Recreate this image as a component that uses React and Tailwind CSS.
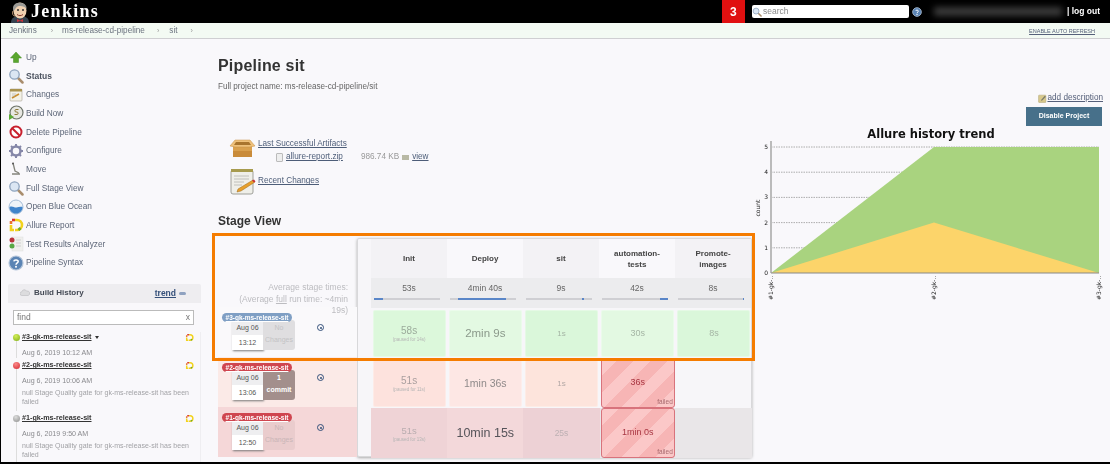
import React from 'react';

const Ic = ({ size = 16, children, className = '' }) => (
  <svg width={size} height={size} viewBox="0 0 16 16" className={`shrink-0 ${className}`}>
    {children}
  </svg>
);

const JenkinsLogo = () => (
  <svg width="20" height="23" viewBox="0 0 20 23" className="shrink-0">
    <path d="M1 23c0-5 3-7 9-7s9 2 9 7z" fill="#35424f" />
    <path d="M7 19l3 1.500 3-1.500v3l-3-1-3 1z" fill="#c8323a" />
    <ellipse cx="10" cy="10.500" rx="6.500" ry="8" fill="#efd0b0" />
    <path d="M3.500 11C1.500 5 6 2 11 3c4 0 6 3 5.500 6-2-3-6-3.500-9-2.500-2 1-2 3-4 4.500z" fill="#9a9a96" />
    <circle cx="8" cy="10" r="1" fill="#333" />
    <circle cx="13" cy="10" r="1" fill="#333" />
    <path d="M7 14.500c2 1.500 4 1.500 6 0" stroke="#8a3b30" strokeWidth="1" fill="none" />
    <path d="M3 11c-1 3 0 5 2 5" stroke="#c9a27e" strokeWidth="1" fill="none" />
  </svg>
);

const UpIcon = () => (
  <Ic><path d="M8 3l5.500 6H10.500v4.500h-5V9H2.500z" fill="#5aa62e" stroke="#3f8a1f" strokeWidth=".5" /></Ic>
);
const SearchIcon = ({ size = 16 }) => (
  <Ic size={size}>
    <path d="M10 10l4.500 4.500" stroke="#a98d6d" strokeWidth="2.500" strokeLinecap="round" />
    <circle cx="6.500" cy="6.500" r="4.700" fill="#dbe6f3" stroke="#8ea3bd" strokeWidth="1.300" />
  </Ic>
);
const NotesIcon = () => (
  <Ic>
    <rect x="2" y="2" width="12" height="12" rx="1" fill="#f3f1e6" stroke="#a7a396" strokeWidth=".6" />
    <rect x="2" y="2" width="12" height="2.500" fill="#a8924f" />
    <path d="M4 11l7-4" stroke="#c98d2c" strokeWidth="1.500" />
    <path d="M4 7h4M4 9h3" stroke="#aaa" strokeWidth=".6" />
  </Ic>
);
const BuildIcon = () => (
  <Ic>
    <circle cx="8.500" cy="7.500" r="6.500" fill="#e7e7e2" stroke="#6c7368" strokeWidth="1.200" />
    <path d="M10.500 4.500H8c-1.500 0-1.500 2.500 0 2.500h1c1.500 0 1.500 2.500 0 2.500H6.500" stroke="#8c7a3c" strokeWidth="1" fill="none" />
    <path d="M1 9l5 3-5 3z" fill="#5cab35" />
  </Ic>
);
const DeleteIcon = () => (
  <Ic>
    <circle cx="8" cy="8" r="5.500" fill="#fff" stroke="#c8202e" strokeWidth="2" />
    <path d="M4.200 4.200l7.600 7.600" stroke="#c8202e" strokeWidth="2" />
  </Ic>
);
const GearIcon = () => (
  <Ic>
    <circle cx="8" cy="8" r="4.500" fill="none" stroke="#8587a8" strokeWidth="2.500" />
    <path d="M8 1v3M8 12v3M1 8h3M12 8h3M3 3l2 2M11 11l2 2M13 3l-2 2M5 11l-2 2" stroke="#8587a8" strokeWidth="2" />
  </Ic>
);
const MoveIcon = () => (
  <Ic>
    <path d="M5 2l2 8 4 2M4 13h8" stroke="#84847c" strokeWidth="1.300" fill="none" />
    <circle cx="5" cy="2.500" r="1" fill="#555" />
  </Ic>
);
const OceanIcon = () => (
  <Ic>
    <circle cx="8" cy="8" r="7" fill="#eef3f8" stroke="#a3bbd6" strokeWidth="1" />
    <path d="M1.500 8c3-1.500 5 1 7 .5s4-1 6-.5c0 4-3 6.500-6.500 6.500S1.500 12 1.500 8z" fill="#3f84cb" />
  </Ic>
);
const AllureIcon = ({ size = 16 }) => (
  <Ic size={size}>
    <path d="M7 3h2a5 5 0 0 1 0 10H7" fill="none" stroke="#f2d21c" strokeWidth="2.600" />
    <path d="M4 3h3" stroke="#d8342c" strokeWidth="2.600" />
    <path d="M3 4v3" stroke="#e8732c" strokeWidth="2.600" />
    <path d="M3 8v5h3" fill="none" stroke="#f2d21c" strokeWidth="2.600" />
    <path d="M12.500 11l-2 2" stroke="#6aa92f" strokeWidth="2.600" />
  </Ic>
);
const AnalyzerIcon = () => (
  <Ic>
    <rect x="4" y="1" width="11" height="14" fill="#efefed" stroke="#ddd" strokeWidth=".5" />
    <circle cx="4" cy="4" r="2.500" fill="#b8323a" />
    <circle cx="4" cy="10" r="2.500" fill="#58a845" />
    <path d="M8 4h5M8 7h5M8 10h5" stroke="#cfcfcf" />
  </Ic>
);
const HelpIcon = ({ size = 16 }) => (
  <Ic size={size}>
    <circle cx="8" cy="8" r="7" fill="#5b84b4" stroke="#b6c6da" strokeWidth="1.200" />
    <path d="M5.800 6.300C6 4.500 10.200 4.400 10.200 6.600 10.200 8 8 8 8 9.800" stroke="#fff" strokeWidth="1.500" fill="none" />
    <circle cx="8" cy="11.800" r="1" fill="#fff" />
  </Ic>
);
const CloudIcon = () => (
  <Ic size={10}>
    <path d="M3 12a3 3 0 0 1 0-6 4 4 0 0 1 7.500-1A3.500 3.500 0 0 1 13 12z" fill="#dcdcde" stroke="#bdbdc0" strokeWidth="1" />
  </Ic>
);
const EditIcon = () => (
  <Ic size={9}>
    <rect x="1" y="2" width="13" height="13" rx="1" fill="#d8c98c" stroke="#a89a68" strokeWidth=".8" />
    <path d="M5 11l7-8 2 2-7 7z" fill="#7a7a6a" />
  </Ic>
);
const BoxIcon = () => (
  <svg width="27" height="21" viewBox="0 0 27 21" className="shrink-0">
    <path d="M4 8h19v11H4z" fill="#d9a04e" />
    <path d="M4 13h19v6H4z" fill="#c98b3a" />
    <path d="M1 8l5-6h15l5 6-5 1H6z" fill="#eec07a" stroke="#c4914a" strokeWidth=".5" />
    <path d="M7 4h13l2 3H5z" fill="#a8742e" />
  </svg>
);
const RecentIcon = () => (
  <svg width="27" height="27" viewBox="0 0 27 27" className="shrink-0">
    <rect x="2" y="2" width="22" height="24" rx="2" fill="#efefe9" stroke="#8a8a84" strokeWidth=".8" />
    <rect x="2" y="1" width="22" height="3" fill="#a79b4e" />
    <path d="M5 8h15M5 11h15M5 14h10M5 17h8" stroke="#b5b5ae" strokeWidth=".8" />
    <path d="M9 21l15-9 2 2-14 9-4 1z" fill="#e8a02c" stroke="#9a6a1c" strokeWidth=".5" />
    <path d="M23 12.500l2-1 1.500 2-1.500 1z" fill="#c8323a" />
  </svg>
);

const tasks = [
  ['Up', UpIcon],
  ['Status', SearchIcon],
  ['Changes', NotesIcon],
  ['Build Now', BuildIcon],
  ['Delete Pipeline', DeleteIcon],
  ['Configure', GearIcon],
  ['Move', MoveIcon],
  ['Full Stage View', SearchIcon],
  ['Open Blue Ocean', OceanIcon],
  ['Allure Report', AllureIcon],
  ['Test Results Analyzer', AnalyzerIcon],
  ['Pipeline Syntax', HelpIcon],
];

const history = [
  { name: '#3-gk-ms-release-sit', ball: 'bg-[radial-gradient(circle_at_40%_30%,#d4ee5a,#7fae16)]', date: 'Aug 6, 2019 10:12 AM', caret: true, h: 'h-[28px]' },
  { name: '#2-gk-ms-release-sit', ball: 'bg-[radial-gradient(circle_at_40%_30%,#fb8a8a,#d3252f)]', date: 'Aug 6, 2019 10:06 AM', note: true, h: 'h-[53px]' },
  { name: '#1-gk-ms-release-sit', ball: 'bg-[radial-gradient(circle_at_40%_30%,#ddd,#8d8d8d)]', date: 'Aug 6, 2019 9:50 AM', note: true, h: 'h-[53px]' },
];

const stages = [
  { name: ['Init'], avg: '53s', bar: 'ml-0 w-[9px]', tint: 'bg-[#f3f2f5]' },
  { name: ['Deploy'], avg: '4min 40s', bar: 'ml-[8px] w-[48px]', tint: 'bg-[#f9f8fb]' },
  { name: ['sit'], avg: '9s', bar: 'ml-[56px] w-[2px]', tint: 'bg-[#f3f2f5]' },
  { name: ['automation-', 'tests'], avg: '42s', bar: 'ml-[58px] w-[8px]', tint: 'bg-[#f9f8fb]' },
  { name: ['Promote-', 'images'], avg: '8s', bar: 'ml-[65px] w-[1px]', tint: 'bg-[#f3f2f5]' },
];

const runs = [
  {
    badge: '#3-gk-ms-release-sit', badgeBg: 'bg-[#7f9fc4]', rowBg: 'bg-[#faf9fb]', date: 'Aug 06', time: '13:12',
    changes: ['No', 'Changes'], changeBg: 'bg-[#dfdee0] text-[#c3c3c5]', tableBg: '',
    cells: [
      { t: '58s', size: 'text-[10px] text-[#9bab9b]', bg: 'bg-[#dcf8db]', sub: '(paused for 14s)' },
      { t: '2min 9s', size: 'text-[11.500px] text-[#8b998b]', bg: 'bg-[#e3f9e2]' },
      { t: '1s', size: 'text-[8px] text-[#a5b5a5]', bg: 'bg-[#daf7da]' },
      { t: '30s', size: 'text-[9px] text-[#a5b5a5]', bg: 'bg-[#e3f9e2]' },
      { t: '8s', size: 'text-[9px] text-[#a5b5a5]', bg: 'bg-[#daf7da]' },
    ],
  },
  {
    badge: '#2-gk-ms-release-sit', badgeBg: 'bg-[#cf4650]', rowBg: 'bg-[#fbeae7]', date: 'Aug 06', time: '13:06',
    changes: ['1', 'commit'], changeBg: 'bg-[#a38f8c] text-white font-bold', tableBg: '',
    cells: [
      { t: '51s', size: 'text-[10px] text-[#a99e9e]', bg: 'bg-[#fde2dd]', sub: '(paused for 11s)' },
      { t: '1min 36s', size: 'text-[10.500px] text-[#8f8a8a]', bg: 'bg-[#fde7e4]' },
      { t: '1s', size: 'text-[8px] text-[#b3a8a6]', bg: 'bg-[#fde4dc]' },
      { t: '36s', failed: true },
      null,
    ],
  },
  {
    badge: '#1-gk-ms-release-sit', badgeBg: 'bg-[#cf4650]', rowBg: 'bg-[#f5d7d8]', date: 'Aug 06', time: '12:50',
    changes: ['No', 'Changes'], changeBg: 'bg-[#eacccd] text-[#c9b5b7]', tableBg: 'bg-[#e9e6e8]',
    cells: [
      { t: '51s', flush: true, size: 'text-[9.500px] text-[#b9adb0]', bg: 'bg-[#efd3d6]', sub: '(paused for 13s)' },
      { t: '10min 15s', flush: true, size: 'text-[12.500px] text-[#56545a]', bg: 'bg-[#f3d8da]' },
      { t: '25s', flush: true, size: 'text-[8.500px] text-[#bdb0b3]', bg: 'bg-[#edd1d5]' },
      { t: '1min 0s', failed: true },
      null,
    ],
  },
];

const BuildRow = ({ run }) => (
  <div className={`relative h-[50px] pl-[14px] pt-[13px] flex items-start ${run.rowBg}`}>
    <span className={`absolute left-[4px] top-[6px] z-10 w-[70px] h-[9px] rounded-full text-center text-[6.500px] leading-[9px] font-bold text-white underline ${run.badgeBg}`}>
      {run.badge}
    </span>
    <div className="w-[31px] h-[30px] bg-white shadow-[1px_1px_2px_#777] text-[7px] text-[#555] text-center">
      <div className="h-[15px] bg-[#eeeef0] leading-[15px]">{run.date}</div>
      <div className="h-[15px] leading-[15px]">{run.time}</div>
    </div>
    <div className={`w-[32px] h-[30px] rounded-r-[3px] text-center text-[7px] leading-[12px] pt-[2px] ${run.changeBg}`}>
      <div>{run.changes[0]}</div>
      <div>{run.changes[1]}</div>
    </div>
    <span className="ml-[22px] mt-[4px] w-[7px] h-[7px] rounded-full border border-[#33507a] flex items-center justify-center">
      <span className="w-[2px] h-[2px] rounded-full bg-[#33507a]" />
    </span>
  </div>
);

const StageCell = ({ cell }) => {
  if (!cell) return <div />;
  if (cell.failed) {
    return (
      <div className="relative mx-[1px] flex items-center justify-center rounded-[3px] border border-[#d8737c] bg-[repeating-linear-gradient(135deg,#fbc8c8_0_12px,#f7b5b5_12px_24px)] text-[9px] font-medium text-[#a83642]">
        {cell.t}
        <span className="absolute right-[1px] bottom-[1px] text-[6.500px] leading-[8px] font-normal text-[#a86a6e]">failed</span>
      </div>
    );
  }
  return (
    <div className={`${cell.flush ? '' : 'm-[1.500px] rounded-[2px] border border-white/30'} flex flex-col items-center justify-center ${cell.bg} ${cell.size}`}>
      <span className="leading-[13px]">{cell.t}</span>
      {cell.sub && <span className="text-[4.500px] leading-[5px] text-[#b5b5b5]">{cell.sub}</span>}
    </div>
  );
};

const TrendChart = () => {
  const y = (n) => 132 - n * 25.2;
  const x = [19, 182, 347];
  return (
    <svg width="358" height="172" viewBox="0 0 358 172" className="block">
      {[1, 2, 3, 4, 5].map((n) => (
        <line key={n} x1="19" x2="347" y1={y(n)} y2={y(n)} stroke="#999" strokeWidth=".8" strokeDasharray="1.500 1" />
      ))}
      <polygon points={`19,132 182,${y(5)} 347,${y(5)} 347,132`} fill="#a9d37f" />
      <polygon points={`19,132 182,${y(2)} 347,132`} fill="#fcd46a" />
      <line x1="19" x2="19" y1="0" y2="132" stroke="#bbb" strokeWidth="2" />
      <line x1="19" x2="347" y1="132" y2="132" stroke="#888" strokeWidth="1" />
      {[0, 1, 2, 3, 4, 5].map((n) => (
        <text key={n} x="16" y={y(n) + 2} textAnchor="end" fontSize="6" fill="#222" fontFamily="'DejaVu Sans', sans-serif">{n}</text>
      ))}
      <text transform="translate(7.500 67) rotate(-90)" textAnchor="middle" fontSize="6" fill="#222" fontFamily="'DejaVu Sans', sans-serif">count</text>
      {['#1-gk-..', '#2-gk-..', '#3-gk-..'].map((l, i) => (
        <text key={l} transform={`translate(${x[i] + 2} 159) rotate(-90)`} fontSize="6" fill="#222" fontFamily="'DejaVu Sans', sans-serif">{l}</text>
      ))}
    </svg>
  );
};

export default function App() {
  return (
    <div className="w-[1110px] h-[464px] overflow-hidden border-l border-b-2 border-black bg-[#f9f8fb] font-['Liberation_Sans',Arial,sans-serif] text-[8.300px] text-[#5d6678]">
      <div className="blur-[0.35px]">
        {/* top bar */}
        <header className="h-[23px] bg-black flex items-center text-white">
          <div className="ml-[9px] w-[21px] h-[23px]"><JenkinsLogo /></div>
          <span className="font-['Liberation_Serif',serif] font-bold text-[18px] tracking-[1.300px]">Jenkins</span>
          <div className="ml-auto w-[23px] h-[23px] bg-[#e01010] flex items-center justify-center font-bold text-[12px]">3</div>
          <div className="ml-[7px] w-[157px] h-[13px] bg-white rounded-[2px] flex items-center text-[8.500px] text-[#8a8a8a]">
            <SearchIcon size={10} />
            <span className="ml-[1px]">search</span>
          </div>
          <div className="ml-[3px]"><HelpIcon size={10} /></div>
          <div className="ml-[12px] w-[128px] h-[9px] bg-[#3a3a3a] blur-[3px]" />
          <span className="ml-[5px] mr-[10px] font-bold text-[8.500px]">| log out</span>
        </header>

        {/* breadcrumbs */}
        <nav className="h-[16px] pt-[1px] bg-[#f3faf3] border-b border-[#cfcfd2] flex items-center text-[8.200px] text-[#6d7480]">
          <span className="ml-[8px]">Jenkins</span>
          <span className="ml-[14px] text-[7px] text-[#999]">›</span>
          <span className="ml-[9px]">ms-release-cd-pipeline</span>
          <span className="ml-[12px] text-[7px] text-[#999]">›</span>
          <span className="ml-[10px]">sit</span>
          <span className="ml-[13px] text-[7px] text-[#999]">›</span>
          <span className="ml-auto mr-[15px] text-[5.500px] underline text-[#56607a]">ENABLE AUTO REFRESH</span>
        </nav>

        <div className="flex">
          {/* side panel */}
          <aside className="w-[217px] shrink-0 pl-[7px] pr-[17px] pt-[9px]">
            <ul>
              {tasks.map(([label, Icon]) => (
                <li key={label} className="h-[18.670px] flex items-center gap-[2px]">
                  <Icon />
                  <span className={label === 'Status' ? 'font-bold text-[8.500px] text-[#4d5460]' : ''}>{label}</span>
                </li>
              ))}
            </ul>
            <section className="mt-[12px]">
              <div className="h-[19px] bg-[#eeedf0] rounded-t-[2px] flex items-center pl-[12px] pr-[15px]">
                <CloudIcon />
                <span className="ml-[4px] font-bold text-[8px] text-[#444a55]">Build History</span>
                <span className="ml-auto font-bold text-[8.500px] underline text-[#35507a]">trend</span>
                <span className="ml-[3px] w-[7px] h-[3px] rounded-sm bg-[#8fa2c0]" />
              </div>
              <div className="ml-[5px] mr-[7px] mt-[7px] h-[15px] border border-[#bbb] bg-white flex items-center justify-between px-[3px] text-[8.500px] text-[#777]">
                <span>find</span>
                <span>x</span>
              </div>
              <div className="mt-[7px] border-r border-[#efeef1]">
                {history.map((b) => (
                  <div key={b.name} className={`relative pl-[14px] pr-[3px] ${b.h}`}>
                    <span className={`absolute left-[4.500px] top-[2px] w-[7px] h-[7px] rounded-full ${b.ball}`} />
                    <span className="absolute left-[7.500px] top-[9px] bottom-[2px] w-px bg-[#ddd]" />
                    <div className="flex items-center h-[12px] pr-[3px]">
                      <span className="font-bold underline text-[7.200px] text-[#333]">{b.name}</span>
                      {b.caret && <span className="ml-[3px] border-x-[2.500px] border-t-[3px] border-x-transparent border-t-[#333]" />}
                      <span className="ml-auto"><AllureIcon size={9} /></span>
                    </div>
                    <div className="mt-[3px] leading-[12px] text-[7.100px] text-[#8a8a8e]">{b.date}</div>
                    {b.note && (
                      <div className="text-[7px] leading-[9.500px] mt-[1px] text-[#a2a2a6]">
                        null Stage Quality gate for gk-ms-release-sit has been failed
                      </div>
                    )}
                  </div>
                ))}
              </div>
            </section>
          </aside>

          {/* main column */}
          <main className="w-[534px] shrink-0 pt-[17px]">
            <h1 className="text-[16px] leading-[20px] font-bold text-[#333] tracking-[0.2px]">Pipeline sit</h1>
            <p className="mt-[5px] leading-[12px] text-[8.150px] text-[#666]">Full project name: ms-release-cd-pipeline/sit</p>
            <div className="mt-[45px] ml-[11px] h-[56px]">
              <div className="flex gap-[2px] h-[30px]">
                <BoxIcon />
                <div className="text-[8.200px]">
                  <a className="underline text-[#4d5d78] leading-[12px] block">Last Successful Artifacts</a>
                  <div className="flex items-center mt-[1px] leading-[12px]">
                    <span className="ml-[18px] w-[7px] h-[9px] border border-[#bbb] bg-[#eee] rounded-[1px]" />
                    <a className="ml-[3px] underline text-[#4d5d78]">allure-report.zip</a>
                    <span className="ml-[18px] text-[#999]">986.74 KB</span>
                    <span className="ml-[3px] w-[7px] h-[5px] bg-[#b9b9a5]" />
                    <a className="ml-[3px] underline text-[#4d5d78]">view</a>
                  </div>
                </div>
              </div>
              <div className="flex items-center gap-[2px] h-[27px]">
                <RecentIcon />
                <a className="underline text-[8.200px] text-[#4d5d78]">Recent Changes</a>
              </div>
            </div>
            <h2 className="mt-[19px] text-[12px] leading-[16px] font-bold text-[#333]">Stage View</h2>

            <div className="relative mt-[9px] flex items-start">
              {/* highlight drawn over the first run */}
              <div className="absolute left-[-6px] top-[-5px] w-[543px] h-[128px] border-[3px] border-[#f57c00] z-20 pointer-events-none" />
              <div className="w-[139px] shrink-0">
                <div className="relative z-10 h-[69px] pt-[44px] pr-[9px] text-right text-[8.500px] leading-[11.500px] font-medium text-[#bcbcc0]">
                  Average stage times:
                  <br />
                  (Average <span className="underline">full</span> run time: ~4min
                  <br />
                  19s)
                </div>
                {runs.map((run) => <BuildRow key={run.badge} run={run} />)}
              </div>
              <div className="w-[395px] h-[219px] rounded-[2px] border border-[#d8d8da] shadow-[0_1px_3px_#aaa] pl-[13px] bg-[#f7f6f9]">
                <div className="grid grid-cols-5 w-[380px] h-[39px] text-[8px] font-bold text-[#444]">
                  {stages.map((s) => (
                    <div key={s.avg} className={`flex flex-col items-center justify-center leading-[11px] ${s.tint}`}>
                      {s.name.map((l) => <span key={l}>{l}</span>)}
                    </div>
                  ))}
                </div>
                <div className="grid grid-cols-5 w-[380px] h-[30px] bg-[#ececee] text-[8.500px] text-[#666]">
                  {stages.map((s) => (
                    <div key={s.avg} className="px-[3px] pt-[4px] text-center leading-[12px]">
                      {s.avg}
                      <div className="mt-[4px] h-[2px] w-[66px] bg-[#cfcfd3]">
                        <div className={`h-[2px] bg-[#5a86c8] ${s.bar}`} />
                      </div>
                    </div>
                  ))}
                </div>
                {runs.map((run) => (
                  <div key={run.badge} className={`grid grid-cols-5 w-[381px] h-[50px] ${run.tableBg}`}>
                    {run.cells.map((c, i) => <StageCell key={i} cell={c} />)}
                  </div>
                ))}
              </div>
            </div>
          </main>

          {/* trend */}
          <aside className="w-[358px] shrink-0 pt-[53px]">
            <div className="pr-[7px] text-[8.200px] leading-[12px] flex justify-end items-center">
              <EditIcon />
              <a className="underline text-[#56607a]">add description</a>
            </div>
            <div className="mt-[3px] ml-auto mr-[8px] w-[76px] h-[19px] bg-[#47708a] text-white font-bold text-[7px] flex items-center justify-center">
              Disable Project
            </div>
            <div className="mt-[2px] text-center font-['DejaVu_Sans',sans-serif] font-bold text-[11.500px] leading-[13px] text-[#111]">
              Allure history trend
            </div>
            <TrendChart />
          </aside>
        </div>
      </div>
    </div>
  );
}
